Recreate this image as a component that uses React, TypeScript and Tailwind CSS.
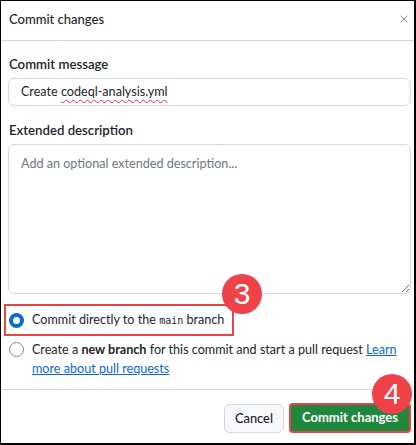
import { X } from 'lucide-react';

const font = { fontFamily: 'Lato, "Noto Sans", sans-serif' };

function Badge({ n, className }: { n: string; className: string }) {
  return (
    <div
      className={`absolute w-[40px] h-[40px] rounded-full bg-[#ef4249] text-white flex items-center justify-center text-[30px] leading-none font-['Liberation_Sans',sans-serif] ${className}`}
    >
      {n}
    </div>
  );
}

export default function App() {
  return (
    <div
      className="w-[416px] h-[445px] bg-white border-t border-l border-r-2 border-b-2 border-black flex flex-col text-[#1f2328] text-[12.6px] overflow-hidden"
      style={font}
    >
      <div className="h-[40px] shrink-0 flex items-center justify-between pl-[8px] pr-[4px] border-b border-[#d1d9e0]">
        <div className="text-[13px] font-medium pb-[2px]">Commit changes</div>
        <X size={12} strokeWidth={1.75} className="text-[#6e7781] mb-[4px]" />
      </div>

      <div className="flex-1 flex flex-col pl-[7px] pr-[3px] relative">
        <div className="mt-[13px] h-[20px] leading-[20px] font-semibold text-[13.2px] pl-[1px]">Commit message</div>
        <div className="mt-[4px] h-[28px] rounded-[6px] border border-[#d1d9e0] flex items-center px-[12px]">
          <span>
            Create{' '}
            <span className="underline decoration-wavy decoration-[#e5353b] decoration-1 underline-offset-[3px]">
              codeql-analysis.yml
            </span>
          </span>
        </div>

        <div className="mt-[14px] h-[20px] leading-[20px] font-semibold text-[13.2px] pl-[1px]">Extended description</div>
        <textarea
          readOnly
          placeholder="Add an optional extended description..."
          className="mt-[4px] h-[150px] rounded-[6px] border border-[#d1d9e0] px-[12px] py-[10px] outline-none resize-y placeholder:text-[#6e7781]"
        />

        <div className="relative mt-[10px] flex flex-col">
          <div className="h-[32px] flex items-center gap-[8px] pl-[1px]">
            <span className="w-[15px] h-[15px] rounded-full border-[4px] border-[#0969da] shrink-0" />
            <span>
              Commit directly to the{' '}
              <code className="text-[10px] font-['DejaVu_Sans_Mono',monospace]">main</code> branch
            </span>
          </div>
          <div className="flex gap-[8px] pl-[1px] mt-[4px] leading-[19px]">
            <span className="w-[15px] h-[15px] rounded-full border border-[#818b98] shrink-0 mt-[2px]" />
            <span>
              Create a <b className="font-bold">new branch</b> for this commit and start a pull request{' '}
              <a href="#" className="text-[#0969da] underline">
                Learn more about pull requests
              </a>
            </span>
          </div>
          <div className="absolute left-[-4px] top-0 w-[230px] h-[32px] border-2 border-[#e8434a]" />
          <Badge n="3" className="left-[214px] top-[-30px]" />
        </div>

        <div className="flex-1" />
      </div>

      <div className="shrink-0 border-t border-[#d1d9e0] h-[54px] flex items-start justify-end gap-[5px] pt-[14px] pr-[3px] relative">
        <button className="h-[29px] w-[60px] rounded-[6px] border border-[#d1d9e0] bg-[#f6f8fa] text-[12.8px] font-medium">
          Cancel
        </button>
        <button className="h-[30px] mt-[-1px] w-[122px] rounded-[4px] border-2 border-[#e8434a] bg-[#1f883d] text-white text-[13px] font-bold">
          Commit changes
        </button>
        <Badge n="4" className="right-[2px] top-[-16px]" />
      </div>
    </div>
  );
}
